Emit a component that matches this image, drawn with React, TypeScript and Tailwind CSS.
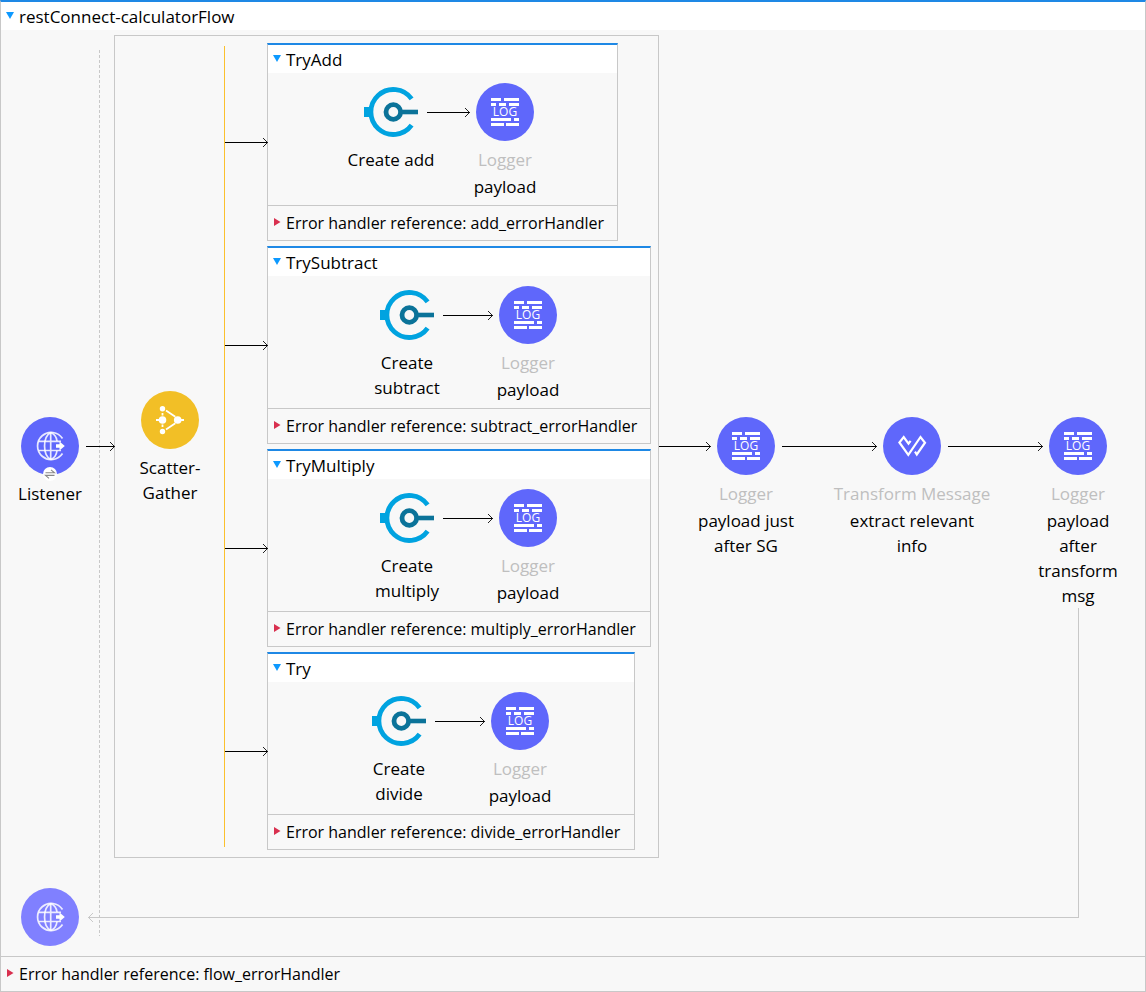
import type { ReactNode } from "react";

const discFill = { indigo: "fill-[#5f67fb]", pale: "fill-[#8080ff]", amber: "fill-[#f2bf26]" };

function Disc({ tone, children }: { tone: keyof typeof discFill; children: ReactNode }) {
  return (
    <svg viewBox="0 0 58 58" className="block size-[58px] shrink-0 overflow-visible" aria-hidden="true">
      <circle cx="29" cy="29" r="29" className={discFill[tone]} />
      {children}
    </svg>
  );
}

function LoggerIcon() {
  return (
    <Disc tone="indigo">
      <path
        fill="#fff"
        d="M15 15h10v3H15zM28 15h15v3H28zM15 20h5v3h-5zM23 20h7v3h-7zM33 20h10v3H33zM15 35h20v3H15zM38 35h5v3h-5zM15 40h13v3H15zM30 40h13v3H30z"
      />
      <text x="29" y="33" textAnchor="middle" fill="#fff" fontSize="12" className="font-['Open_Sans',sans-serif]">
        LOG
      </text>
    </Disc>
  );
}

function HttpIcon({ tone, exchange }: { tone: "indigo" | "pale"; exchange?: boolean }) {
  return (
    <Disc tone={tone}>
      <g fill="none" stroke="#fff" strokeOpacity="0.85" strokeWidth="1.7">
        <path d="M41.5 21.5A13.6 13.6 0 1 0 41.5 36.5" />
        <path d="M29.700 15.500V42.500M17.500 24.300H40M17.500 33.500H40" />
        <path d="M29.700 15.500C21.500 20 21.500 38 29.700 42.500M29.700 15.500C33.500 17 35.500 20 36 24M36 33.500C35.500 38 33.500 41 29.700 42.500" />
      </g>
      <path fill="#fff" d="M35 27.300H38.500V24.500L43.800 29L38.500 33.500V30.700H35z" />
      {exchange && (
        <g>
          <circle cx="29" cy="57" r="7" fill="#fff" />
          <path d="M24.500 55.800H33.500L30 52.800M33.500 58.400H24.500L28 61.400" fill="none" stroke="#888" strokeWidth="1.100" />
        </g>
      )}
    </Disc>
  );
}

function ScatterIcon() {
  return (
    <Disc tone="amber">
      <g fill="#fff">
        <circle cx="21.500" cy="17.700" r="2.700" />
        <circle cx="21.500" cy="29" r="3.800" />
        <circle cx="21.500" cy="40.500" r="2.700" />
        <circle cx="36.700" cy="29" r="3.800" />
      </g>
      <path
        d="M15 29H19M39 29H43M21.500 22V24.500M21.500 33.500V36M25 19.500L34.300 25.700M25 38.500L34.300 32.300"
        stroke="#fff"
        strokeWidth="1.800"
      />
    </Disc>
  );
}

function TransformIcon() {
  return (
    <Disc tone="indigo">
      <path
        d="M27.600 23.800L25.500 26.700L20.700 20L16.400 25.500L25.300 37.800L37.500 20L42 25.700L33.800 37.500L32 34.700"
        fill="none"
        stroke="#fff"
        strokeWidth="2.200"
      />
    </Disc>
  );
}

function ConnectorIcon() {
  return (
    <svg viewBox="0 0 58 58" className="block size-[58px] shrink-0" aria-hidden="true">
      <path d="M49.600 15.800A22.500 22.500 0 1 0 49.600 42.200" fill="none" stroke="#00a3e0" strokeWidth="4.800" />
      <path d="M2 24H9V34H2z" fill="#00a3e0" />
      <circle cx="31.300" cy="29" r="7.300" fill="none" stroke="#0b7399" strokeWidth="4.800" />
      <path d="M38 26.700H56V31.300H38z" fill="#0b7399" />
    </svg>
  );
}

function Arrow({ className }: { className: string }) {
  return (
    <div className={`relative z-10 flex items-center self-center ${className}`}>
      <div className="-mr-[6px] h-px flex-1 bg-black" />
      <svg viewBox="0 0 6 11" className="h-[11px] w-[6px] shrink-0" aria-hidden="true">
        <path d="M1 1L5.500 5.500L1 10" fill="none" stroke="#222" />
      </svg>
    </div>
  );
}

type NodeProps = { icon: ReactNode; kind?: string; label: string };

function NodeText({ kind, label }: { kind?: string; label: string }) {
  return (
    <div className="flex w-[98px] shrink-0 flex-col items-center gap-[2px] pt-[6px] text-center">
      {kind && <span className="whitespace-nowrap text-[#bfbfbf]">{kind}</span>}
      <span className="whitespace-pre">{label}</span>
    </div>
  );
}

/* Keeps its disc on the centre line of the row; the text hangs below. */
function FlowNode({ icon, kind, label, tail }: NodeProps & { tail?: boolean }) {
  return (
    <div className="grid shrink-0 grid-cols-[58px] grid-rows-[1fr_auto_1fr] self-stretch pb-px">
      <div />
      {icon}
      <div className="flex flex-col">
        <div className="flex justify-center">
          <NodeText kind={kind} label={label} />
        </div>
        {tail && <div className="-mb-px ml-[29px] flex-1 border-l border-[#c8c8c8]" />}
      </div>
    </div>
  );
}

function ScopeNode({ icon, kind, label }: NodeProps) {
  return (
    <div className="flex w-[58px] shrink-0 flex-col items-center">
      {icon}
      <NodeText kind={kind} label={label} />
    </div>
  );
}

function ScopeTitle({ children }: { children: ReactNode }) {
  return (
    <div className="flex h-7 items-center gap-[5px] bg-white pl-[5px]">
      <svg viewBox="0 0 8 7" className="mb-px h-[7px] w-2 shrink-0" aria-hidden="true">
        <path d="M0 0H8L4 7z" fill="#0d99ff" />
      </svg>
      <span>{children}</span>
    </div>
  );
}

function ErrorRef({ name }: { name: string }) {
  return (
    <div className="flex h-[35px] items-center gap-[5px] whitespace-nowrap border-t border-[#c8c8c8] pl-[5px]">
      <svg viewBox="0 0 8 8" className="mb-[2px] size-2 shrink-0" aria-hidden="true">
        <path d="M1 0L7.500 4L1 8z" fill="#d9304f" />
      </svg>
      <span className="text-base leading-[25px]">Error handler reference: {name}</span>
    </div>
  );
}

const scopes = [
  { title: "TryAdd", call: "Create add", handler: "add_errorHandler", width: "w-[351px]", inset: "pl-[94px]", arrow: "w-[43px]" },
  { title: "TrySubtract", call: "Create\nsubtract", handler: "subtract_errorHandler", width: "w-[384px]", inset: "pl-[110px]", arrow: "w-[50px]" },
  { title: "TryMultiply", call: "Create\nmultiply", handler: "multiply_errorHandler", width: "w-[384px]", inset: "pl-[110px]", arrow: "w-[50px]" },
  { title: "Try", call: "Create\ndivide", handler: "divide_errorHandler", width: "w-[368px]", inset: "pl-[102px]", arrow: "w-[50px]" },
];

export default function App() {
  return (
    <main className="min-w-fit border border-t-2 border-[#c8c8c8] border-t-[#1e88e5] bg-[#f8f8f8] font-['Open_Sans','Noto_Sans',sans-serif] text-[17px] leading-[25px] text-black">
      <ScopeTitle>restConnect-calculatorFlow</ScopeTitle>

      <div className="relative pb-[10px] pt-[5px]">
        <div className="absolute bottom-5 left-[98px] top-5 w-px bg-[repeating-linear-gradient(to_bottom,#c8c8c8_0_3px,transparent_3px_5px)]" />

        <div className="relative flex pl-5 pr-[38px]">
          <FlowNode icon={<HttpIcon tone="indigo" exchange />} label="Listener" />
          <Arrow className="-mr-px ml-[7px] w-[29px]" />

          <section className="flex shrink-0 items-center border border-[#c8c8c8] py-[7px] pr-[7px]">
            <div className="flex w-[109px] flex-col items-center pl-px pt-[3px]">
              <ScatterIcon />
              <NodeText label={"Scatter-\nGather"} />
            </div>
            <div className="my-[3px] w-px self-stretch bg-[#fbc02d]" />
            <div className="flex flex-col gap-[5px]">
              {scopes.map((s) => (
                <div key={s.title} className="flex items-center">
                  <Arrow className="-mr-px w-[43px]" />
                  <section className={`border border-t-2 border-[#c8c8c8] border-t-[#1e88e5] ${s.width}`}>
                    <ScopeTitle>{s.title}</ScopeTitle>
                    <div className={`flex h-[132px] pt-[10px] ${s.inset}`}>
                      <ScopeNode icon={<ConnectorIcon />} label={s.call} />
                      <div className="ml-[7px] mr-[6px] flex h-[58px]">
                        <Arrow className={s.arrow} />
                      </div>
                      <ScopeNode icon={<LoggerIcon />} kind="Logger" label="payload" />
                    </div>
                    <ErrorRef name={s.handler} />
                  </section>
                </div>
              ))}
            </div>
          </section>

          <Arrow className="mr-[6px] w-[52px]" />
          <FlowNode icon={<LoggerIcon />} kind="Logger" label={"payload just\nafter SG"} />
          <Arrow className="ml-[7px] mr-[6px] min-w-[95px] flex-1" />
          <FlowNode icon={<TransformIcon />} kind="Transform Message" label={"extract relevant\ninfo"} />
          <Arrow className="ml-[7px] mr-[6px] min-w-[95px] flex-1" />
          <FlowNode icon={<LoggerIcon />} kind="Logger" label={"payload\nafter\ntransform\nmsg"} tail />
        </div>

        <div className="relative flex pl-5 pr-[66px]">
          <div className="pt-[30px]">
            <HttpIcon tone="pale" />
          </div>
          <div className="ml-[9px] flex h-[60px] flex-1 items-end border-b border-r border-[#c8c8c8]">
            <svg viewBox="0 0 6 11" className="-mb-[6px] h-[11px] w-[6px]" aria-hidden="true">
              <path d="M5 1L0.500 5.500L5 10" fill="none" stroke="#c8c8c8" />
            </svg>
          </div>
        </div>
      </div>

      <ErrorRef name="flow_errorHandler" />
    </main>
  );
}
